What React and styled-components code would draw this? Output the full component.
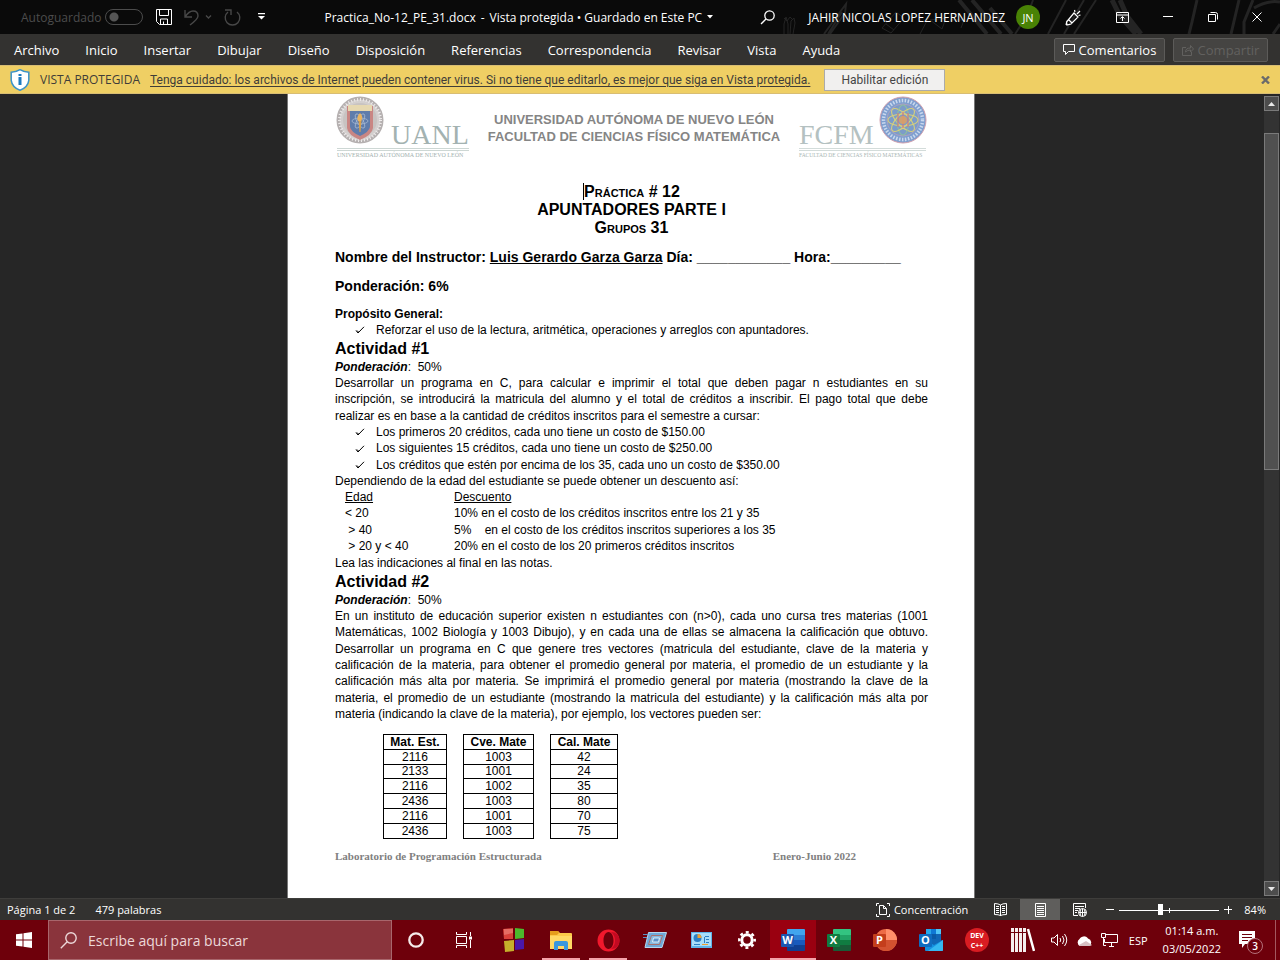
import React from 'react';
import styled, { createGlobalStyle } from 'styled-components';

const UI = '"Open Sans", "Noto Sans", sans-serif';
const COMPACT = 'Roboto, "Open Sans", sans-serif';
const DOC = '"Liberation Sans", Arial, sans-serif';
const SERIF = '"Liberation Serif", "Times New Roman", serif';

const GlobalStyle = createGlobalStyle`
  * { box-sizing: border-box; }
  body { margin: 0; background: #262626; font-family: ${UI}; }
  button, input { font-family: inherit; }
  svg { display: block; flex: none; }
`;

const Shell = styled.div`
  height: 100vh;
  display: flex;
  flex-direction: column;
  overflow: hidden;
`;

const IconButton = styled.button`
  display: flex;
  align-items: center;
  justify-content: center;
  padding: 0;
  border: 0;
  background: none;
  color: ${p => (p.$dim ? '#484848' : '#ffffff')};
  flex: none;
`;

/* Title bar */
const TitleBar = styled.header`
  position: relative;
  display: flex;
  align-items: center;
  height: 34px;
  flex: none;
  padding: 0 18px 0 21px;
  background: #0a0a0a;
  color: #ffffff;
  font-size: 12px;
  white-space: nowrap;
`;
const Doodles = styled.svg`
  position: absolute;
  top: 0;
  right: 0;
`;
const AutoSave = styled.label`
  display: flex;
  align-items: center;
  gap: 4px;
  color: #4c4c4c;
`;
const Toggle = styled.input`
  appearance: none;
  margin: 0;
  width: 38px;
  height: 16px;
  border: 1px solid #4c4c4c;
  border-radius: 8px;
  background: radial-gradient(circle at 8px 7px, #555555 4px, transparent 5px);
`;
const QuickTools = styled.div`
  display: flex;
  align-items: center;
  margin-left: 13px;
  gap: 12px;
`;
const FileName = styled.h1`
  margin: 0 0 0 55px;
  font-size: 12px;
  font-weight: 400;
  display: flex;
  align-items: center;
  gap: 5px;
`;
const Account = styled.div`
  position: relative;
  margin-left: auto;
  display: flex;
  align-items: center;
  gap: 11px;
`;
const SearchButton = styled(IconButton)`
  margin-right: 22px;
`;
const Avatar = styled.span`
  width: 24px;
  height: 24px;
  border-radius: 50%;
  background: #498205;
  display: grid;
  place-items: center;
  font-size: 11px;
`;
const WindowTools = styled.div`
  display: flex;
  align-items: center;
  justify-content: space-between;
  width: 197px;
  margin-left: 14px;
`;

/* Ribbon tabs */
const Ribbon = styled.nav`
  display: flex;
  align-items: center;
  height: 31px;
  flex: none;
  padding: 0 12px 0 14px;
  background: #333230;
  color: #ffffff;
`;
const Tabs = styled.div`
  display: flex;
  gap: 26px;
  margin-right: auto;
`;
const Tab = styled.a`
  color: #ffffff;
  text-decoration: none;
  font-size: 13px;
  line-height: 20px;
`;
const RibbonButton = styled.button`
  display: flex;
  align-items: center;
  justify-content: center;
  gap: 4px;
  height: 24px;
  width: ${p => p.$width};
  margin-left: 8px;
  padding: 0;
  border: 1px solid #5c5b59;
  border-radius: 2px;
  background: #454442;
  color: ${p => (p.$dim ? '#62615f' : '#ffffff')};
  font-size: 13px;
`;

/* Protected view message */
const MessageBar = styled.div`
  display: flex;
  align-items: center;
  height: 29px;
  flex: none;
  padding: 0 10px;
  background: #efcf64;
  border-top: 1px solid #d8bd73;
  border-bottom: 1px solid #d8bd73;
  color: #3f3d38;
  font-size: 12px;
  white-space: nowrap;
`;
const MessageTitle = styled.span`
  margin: 0 10px;
`;
const MessageLink = styled.a`
  color: inherit;
  font-family: ${COMPACT};
  text-underline-offset: 2px;
`;
const EnableButton = styled.button`
  height: 22px;
  width: 121px;
  margin-left: 14px;
  padding: 0;
  border: 1px solid #ababab;
  background: #f1f0ef;
  color: #444444;
  font-family: ${COMPACT};
  font-size: 12px;
`;
const CloseMessage = styled(IconButton)`
  margin-left: auto;
`;

/* Document area */
const Workspace = styled.main`
  display: flex;
  flex: 1;
  min-height: 0;
  background: #262626;
`;
const Canvas = styled.div`
  flex: 1;
  overflow: hidden;
  display: flex;
  justify-content: center;
  padding-right: 2px;
`;
const Page = styled.article`
  width: 688px;
  padding: 2px 46px 0 47px;
  background: #ffffff;
  border-left: 1px solid #777777;
  border-right: 1px solid #777777;
  color: #000000;
  font-family: ${DOC};
  font-size: 12px;
  line-height: 16px;
`;
const PageHeader = styled.div`
  display: flex;
  align-items: flex-start;
  justify-content: space-between;
  height: 64px;
`;
const School = styled.p`
  margin: 15px 0 0;
  color: #858585;
  font-size: 13px;
  line-height: 17px;
  font-weight: 700;
  text-align: center;
  white-space: nowrap;
`;
const Title = styled.h2`
  margin: 23px 0 12px;
  font-size: 16px;
  line-height: 18px;
  font-weight: 700;
  text-align: center;
`;
const SmallCaps = styled.span`
  font-variant: small-caps;
`;
const Caret = styled.span`
  border-left: 1px solid #000000;
`;
const FieldLine = styled.p`
  margin: 0 0 13px;
  font-size: 14px;
  line-height: 16px;
  font-weight: 700;
  white-space: nowrap;
`;
const Purpose = styled.h3`
  margin: 0;
  font-size: 12px;
  line-height: 15px;
`;
const Activity = styled.h3`
  margin: 0;
  font-size: 16px;
  line-height: 21px;
`;
const Para = styled.p`
  margin: 0;
`;
const Line = styled.span`
  display: block;
  text-align: justify;
  text-align-last: ${p => (p.$last ? 'left' : 'justify')};
  &:nth-child(3n + 2) { line-height: 17px; }
`;
const Checks = styled.ul`
  margin: 0;
  padding: 0 0 0 20px;
  list-style: none;
`;
const Check = styled.li`
  display: flex;
  align-items: center;
  gap: 11px;
  &:nth-child(2) { line-height: 17px; }
`;
const Discounts = styled.table`
  border-collapse: collapse;
  margin: 0 0 1px 10px;
  th { font-weight: 400; text-decoration: underline; text-align: left; }
  th, td { padding: 0; height: 16px; }
  tr:nth-child(3) td { height: 17px; }
  th:first-child, td:first-child { width: 109px; }
`;
const Vectors = styled.div`
  display: flex;
  gap: 16px;
  margin: 12px 0 0 48px;
`;
const Vector = styled.table`
  width: ${p => p.$width};
  border-collapse: collapse;
  text-align: center;
  th, td { border: 1px solid #000000; padding: 0; height: 15px; line-height: 14px; }
  tr:nth-child(3) td { line-height: 13px; height: 14px; }
`;
const PageFooter = styled.footer`
  display: flex;
  justify-content: space-between;
  margin: 9px 72px 0 0;
  color: #808080;
  font-family: ${SERIF};
  font-weight: 700;
  font-size: 11px;
`;

/* Scroll bar */
const ScrollBar = styled.div`
  width: 16px;
  padding: 2px 1px 2px 0;
  display: flex;
  flex-direction: column;
  background: #262626;
`;
const ScrollButton = styled.button`
  height: 15px;
  padding: 0;
  display: grid;
  place-items: center;
  border: 1px solid #7a7a7a;
  background: #4d4d4d;
  color: #e8e8e8;
`;
const ScrollTrack = styled.div`
  flex: 1;
  padding-top: 22px;
  background: #333333;
`;
const ScrollThumb = styled.div`
  height: 45%;
  border: 1px solid #7a7a7a;
  background: #505050;
`;

/* Status bar */
const StatusBar = styled.footer`
  display: flex;
  align-items: center;
  height: 22px;
  flex: none;
  padding: 0 14px 0 7px;
  background: #333230;
  border-top: 1px solid #3e3d3b;
  color: #ffffff;
  font-size: 11px;
  white-space: nowrap;
`;
const StatusInfo = styled.div`
  display: flex;
  gap: 20px;
  margin-right: auto;
`;
const Focus = styled(IconButton)`
  gap: 4px;
  font-size: 11px;
  margin-right: 12px;
`;
const ViewButton = styled(IconButton)`
  width: 40px;
  height: 21px;
  background: ${p => (p.$on ? '#5f5e5c' : 'none')};
`;
const ZoomBar = styled.div`
  display: flex;
  align-items: center;
  gap: 5px;
  margin: 0 12px 0 6px;
`;
const ZoomRange = styled.input`
  appearance: none;
  width: 100px;
  height: 12px;
  margin: 0;
  background:
    linear-gradient(#ffffff, #ffffff) 50px 4px / 1px 5px no-repeat,
    linear-gradient(#ffffff, #ffffff) 0 6px / 100% 1px no-repeat;
  &::-webkit-slider-thumb {
    appearance: none;
    width: 5px;
    height: 11px;
    background: #ffffff;
  }
`;

/* Task bar */
const TaskBar = styled.div`
  display: flex;
  align-items: stretch;
  height: 40px;
  flex: none;
  background: #6e000b;
  color: #ffffff;
`;
const Start = styled(IconButton)`
  width: 48px;
`;
const SearchBox = styled.label`
  display: flex;
  align-items: center;
  gap: 11px;
  width: 344px;
  padding: 0 11px;
  background: #8a343c;
  border: 1px solid #a8666c;
`;
const SearchInput = styled.input`
  flex: 1;
  min-width: 0;
  border: 0;
  padding: 0;
  background: none;
  color: #ffffff;
  font-size: 14px;
  &::placeholder { color: #ecd8d9; opacity: 1; }
`;
const SystemButtons = styled.div`
  display: flex;
  margin-right: 3px;
`;
const Pinned = styled.div`
  display: flex;
  gap: ${p => p.$gap || '0'};
`;
const TaskButton = styled(IconButton)`
  width: ${p => (p.$wide ? '48px' : '46px')};
  background: ${p => (p.$active ? '#9a0010' : 'none')};
  background-image: ${p => (p.$open ? 'linear-gradient(#f4a3aa, #f4a3aa)' : 'none')};
  background-size: ${p => (p.$active ? '100%' : '38px')} 2px;
  background-position: bottom center;
  background-repeat: no-repeat;
`;
const Tray = styled.div`
  display: flex;
  align-items: center;
  margin-left: auto;
  gap: 8px;
  padding-right: 4px;
  font-size: 11px;
  white-space: nowrap;
`;
const Language = styled.span`
  margin: 0 7px 0 3px;
`;
const Clock = styled.time`
  text-align: center;
  line-height: 18px;
`;
const Notices = styled(IconButton)`
  position: relative;
  width: 26px;
  height: 30px;
  margin: 0 4px 0 8px;
`;
const Badge = styled.span`
  position: absolute;
  right: 0;
  bottom: 1px;
  width: 16px;
  height: 16px;
  border: 1px solid #b5707a;
  border-radius: 50%;
  background: #6e000b;
  font-size: 10px;
  line-height: 14px;
  font-weight: 600;
`;
const ShowDesktop = styled.span`
  width: 1px;
  height: 40px;
  background: #a3585f;
`;

const Svg = ({ w = 16, h = w, children, ...rest }) => (
  <svg width={w} height={h} viewBox={`0 0 ${w} ${h}`} fill="none" stroke="currentColor" aria-hidden="true" {...rest}>
    {children}
  </svg>
);

const tabs = ['Archivo', 'Inicio', 'Insertar', 'Dibujar', 'Diseño', 'Disposición', 'Referencias', 'Correspondencia', 'Revisar', 'Vista', 'Ayuda'];

const firstActivity = [
  'Desarrollar un programa en C, para calcular e imprimir el total que deben pagar n estudiantes en su',
  'inscripción, se introducirá la matricula del alumno y el total de créditos a inscribir. El pago total que debe',
  'realizar es en base a la cantidad de créditos inscritos para el semestre a cursar:',
];
const costs = [
  'Los primeros 20 créditos, cada uno tiene un costo de $150.00',
  'Los siguientes 15 créditos, cada uno tiene un costo de $250.00',
  'Los créditos que estén por encima de los 35, cada uno un costo de $350.00',
];
const discounts = [
  ['< 20', '10% en el costo de los créditos inscritos entre los 21 y 35'],
  ['\u00a0> 40', '5%\u00a0\u00a0\u00a0 en el costo de los créditos inscritos superiores a los 35'],
  ['\u00a0> 20 y < 40', '20% en el costo de los 20 primeros créditos inscritos'],
];
const secondActivity = [
  'En un instituto de educación superior existen n estudiantes con (n>0), cada uno cursa tres materias (1001',
  'Matemáticas, 1002 Biología y 1003 Dibujo), y en cada una de ellas se almacena la calificación que obtuvo.',
  'Desarrollar un programa en C que genere tres vectores (matricula del estudiante, clave de la materia y',
  'calificación de la materia, para obtener el promedio general por materia, el promedio de un estudiante y la',
  'calificación más alta por materia. Se imprimirá el promedio general por materia (mostrando la clave de la',
  'materia, el promedio de un estudiante (mostrando la matricula del estudiante) y la calificación más alta por',
  'materia (indicando la clave de la materia), por ejemplo, los vectores pueden ser:',
];
const vectors = [
  { name: 'Mat. Est.', width: '64px', values: [2116, 2133, 2116, 2436, 2116, 2436] },
  { name: 'Cve. Mate', width: '71px', values: [1003, 1001, 1002, 1003, 1001, 1003] },
  { name: 'Cal. Mate', width: '68px', values: [42, 24, 35, 80, 70, 75] },
];

const Lines = ({ lines }) => (
  <Para>
    {lines.map((text, i) => <Line key={text} $last={i === lines.length - 1}>{text}</Line>)}
  </Para>
);

const CheckItem = ({ children }) => (
  <Check>
    <Svg w={10} h={8}><path d="M1 4.500l2 2.500L9 .8M2 4.500l1.500 1.500" /></Svg>
    {children}
  </Check>
);

const UanlLogo = () => (
  <svg width="135" height="64" viewBox="0 0 135 64" role="img" aria-label="UANL">
    <circle cx="25" cy="24" r="22" fill="#d3cfce" stroke="#b5b0b0" strokeWidth="3" />
    <circle cx="25" cy="24" r="20.500" fill="none" stroke="#efecec" strokeWidth="3" strokeDasharray="1 2" />
    <circle cx="25" cy="24" r="17" fill="#c8c3c1" />
    <path d="M12 10h26v22q-1 7-13 12q-12-5-13-12z" fill="#c98683" />
    <path d="M15 12h20v19q-1 5-10 9q-9-4-10-9z" fill="#5f7cab" />
    <path d="M13 9h24v6H13z" fill="#e6d8b0" />
    <g fill="none" stroke="#a5b7d0" strokeWidth=".8">
      <ellipse cx="25" cy="25" rx="8" ry="3" />
      <ellipse cx="25" cy="25" rx="8" ry="3" transform="rotate(60 25 25)" />
      <ellipse cx="25" cy="25" rx="8" ry="3" transform="rotate(120 25 25)" />
    </g>
    <path d="M23.500 24h3l-1 12h-1z" fill="#d9a14d" />
    <path d="M25 17q4 4 1 8h-3q-2-4 2-8z" fill="#e9b35f" />
    <text x="56" y="48" fontFamily={SERIF} fontSize="28" fill="#a3b2b1">UANL</text>
    <path d="M2 52.500h132M2 54.500h132" stroke="#cdd7d4" />
    <text x="2" y="61" fontFamily={SERIF} fontSize="6" fill="#a3b1af">UNIVERSIDAD AUTÓNOMA DE NUEVO LEÓN</text>
  </svg>
);

const FcfmLogo = () => (
  <svg width="130" height="64" viewBox="0 0 130 64" role="img" aria-label="FCFM">
    <text x="1" y="48" fontFamily={SERIF} fontSize="28" fill="#b4c1c1">FCFM</text>
    <path d="M1 52.500h127M1 54.500h127" stroke="#d3dcda" />
    <text x="1" y="61" fontFamily={SERIF} fontSize="5.500" fill="#a9b6b4">FACULTAD DE CIENCIAS FÍSICO MATEMÁTICAS</text>
    <circle cx="105" cy="24" r="23" fill="#7f9fcf" stroke="#cf9fae" />
    <circle cx="105" cy="24" r="19.500" fill="none" stroke="#c9d8ee" strokeWidth="3.500" strokeDasharray="1.500 1.500" />
    <circle cx="105" cy="24" r="16" fill="#7c9cc9" stroke="#c1a4bc" strokeWidth=".7" />
    <g fill="none" strokeWidth="1.100">
      <ellipse cx="105" cy="24" rx="15" ry="6" stroke="#d6cf7c" />
      <ellipse cx="105" cy="24" rx="15" ry="6" stroke="#d6cf7c" transform="rotate(45 105 24)" />
      <ellipse cx="105" cy="24" rx="15" ry="6" stroke="#8fc09c" transform="rotate(90 105 24)" />
      <ellipse cx="105" cy="24" rx="15" ry="6" stroke="#d6cf7c" transform="rotate(135 105 24)" />
      <path d="M100 17v14M105 16v16M110 17v14" stroke="#d0757f" />
    </g>
    <circle cx="105" cy="24" r="4" fill="#e2a35c" opacity=".8" />
  </svg>
);

const OfficeIcon = ({ letter, tones, round }) => (
  <svg width="24" height="22" viewBox="0 0 24 22" aria-hidden="true">
    {round ? (
      <g>
        <circle cx="13" cy="11" r="11" fill={tones[1]} />
        <path d="M13 0a11 11 0 0 1 11 11H13z" fill={tones[0]} />
        <path d="M2 11h22a11 11 0 0 1-22 0z" fill={tones[2]} />
      </g>
    ) : (
      <g>
        <path d="M6 1q0-1 1-1h16q1 0 1 1v5H6z" fill={tones[0]} />
        <path d="M6 6h18v5H6z" fill={tones[1]} />
        <path d="M6 11h18v5H6z" fill={tones[2]} />
        <path d="M6 16h18v5q0 1-1 1H7q-1 0-1-1z" fill={tones[3]} />
      </g>
    )}
    <rect x="0" y="5" width="13" height="13" rx="1" fill={tones[4]} />
    <text x="6.500" y="15" textAnchor="middle" fontFamily={UI} fontWeight="700" fontSize="11" fill="#fff">{letter}</text>
  </svg>
);

const OutlookIcon = () => (
  <svg width="24" height="22" viewBox="0 0 24 22" aria-hidden="true">
    <path d="M7 0h15v11l2 1v6H7z" fill="#1066b5" />
    <path d="M7 0h5v5H7z" fill="#28a8ea" />
    <path d="M12 0h5v5h-5z" fill="#0f78d4" />
    <path d="M17 0h5v5h-5z" fill="#50c5f5" />
    <path d="M12 5h5v5h-5z" fill="#0a5aa6" />
    <path d="M6 11l9 5 9-5v10q0 1-1 1H7q-1 0-1-1z" fill="#1490df" />
    <path d="M24 11v10q0 1-1 1H9z" fill="#35b8f1" />
    <rect x="0" y="5" width="13" height="13" rx="1" fill="#0f6cc0" />
    <text x="6.500" y="15" textAnchor="middle" fontFamily={UI} fontWeight="700" fontSize="11" fill="#fff">O</text>
  </svg>
);

export default function App() {
  return (
    <Shell>
      <GlobalStyle />
      <TitleBar>
        <Doodles width="520" height="34" fill="none" stroke="#242424" strokeWidth="2" aria-hidden="true">
          <path d="M24 34V24l2-7 2 7v10M30 34l1-13 3-3 1 5-2 11M24 18l3 3 3-4 3 3" strokeWidth="1" />
          <path d="M64 34l16-22 6-8-1 9-15 21M68 34l14-22" />
          <path d="M122 28l14-16 8 6-13 15zM126 24l8 6M160 34l9-17M170 20l16-2-4 11zM190 20h14l-3 8" strokeWidth="1" />
          <path d="M199 0l28 34M212 0l29 34M230 8l22 26" strokeWidth="4" />
          <path d="M273 0q-5 16-18 34M306 0l-18 34M324 0l-20 34M336 0l-22 34" />
          <path d="M352 0l8 16 16 18M360 0l7 16 14 18" strokeWidth="5" />
          <path d="M437 0l-5 22-3 12M479 0l-8 34M493 0l-9 22v12M494 8q13-8 26-6M520 24l-7 10" strokeWidth="3" />
        </Doodles>
        <AutoSave>Autoguardado<Toggle type="checkbox" disabled /></AutoSave>
        <QuickTools>
          <IconButton aria-label="Guardar"><Svg w={16}><path d="M.5.5h15v15H3.500l-3-3zM3.500.5v6h9v-6M4.500 15v-5h7v5M7.500 12.500V15" /></Svg></IconButton>
          <IconButton aria-label="Deshacer" $dim>
            <Svg w={28} h={17} strokeWidth="1.400"><path d="M1 1v7h7M1 8Q5 2 9 2q5 0 5 5 0 3-8 9" /><path d="M22 6.500l2.500 2.500L27 6.500" /></Svg>
          </IconButton>
          <IconButton aria-label="Rehacer" $dim><Svg w={17} strokeWidth="1.400"><path d="M1 1h6v5M13 3a7.300 7.300 0 1 1-9 0" /></Svg></IconButton>
          <IconButton aria-label="Personalizar"><Svg w={16} h={8}><path d="M5 .5h7" strokeWidth="1.500" /><path d="M5 3h7l-3.500 3.500z" fill="currentColor" stroke="none" /></Svg></IconButton>
        </QuickTools>
        <FileName>
          <span>Practica_No-12_PE_31.docx</span><span>-</span><span>Vista protegida • Guardado en Este PC</span>
          <Svg w={6} h={4}><path d="M0 0h6L3 3.500z" fill="currentColor" stroke="none" /></Svg>
        </FileName>
        <Account>
          <SearchButton aria-label="Buscar"><Svg w={15} strokeWidth="1.300"><circle cx="9.500" cy="5.500" r="4.700" /><path d="M6 9L1 14" /></Svg></SearchButton>
          <span>JAHIR NICOLAS LOPEZ HERNANDEZ</span>
          <Avatar>JN</Avatar>
          <WindowTools>
            <IconButton aria-label="Novedades"><Svg w={16} h={17} strokeWidth="1.200"><path d="M9 4l4 4-7 7-4 1-.5-3zM4 11l3 3M10 3L9.500 1M12 5l3-3M13.500 6.500l2-.5M2 12l-1 4" /></Svg></IconButton>
            <IconButton aria-label="Opciones de cinta"><Svg w={13} h={11}><path d="M.5.5h12v10H.5zM.5 3h12M6.500 9V5M4.500 6.500l2-2 2 2" /></Svg></IconButton>
            <IconButton aria-label="Minimizar"><Svg w={10}><path d="M0 4.500h10" /></Svg></IconButton>
            <IconButton aria-label="Restaurar"><Svg w={10}><path d="M.5 2.500h7v7h-7zM2.500.5h5q2 0 2 2v5" /></Svg></IconButton>
            <IconButton aria-label="Cerrar"><Svg w={10}><path d="M.5.5l9 9M9.500.5l-9 9" /></Svg></IconButton>
          </WindowTools>
        </Account>
      </TitleBar>

      <Ribbon>
        <Tabs>{tabs.map(t => <Tab key={t} href="#">{t}</Tab>)}</Tabs>
        <RibbonButton $width="111px">
          <Svg w={12} h={11}><path d="M.5.5h11v7h-6l-3 3v-3h-2z" /></Svg>Comentarios
        </RibbonButton>
        <RibbonButton $width="95px" $dim disabled>
          <Svg w={12} h={12}><path d="M4 3.500H.5v8h9V8M3.500 8q0-4 5-4V1.500l3 3.500-3 3V6q-3 0-5 2z" /></Svg>Compartir
        </RibbonButton>
      </Ribbon>

      <MessageBar>
        <Svg w={20} h={22} stroke="none">
          <path d="M10 .7q4 2.600 8.800 2.600v8Q18 18 10 21.300 2 18 1.200 11.300v-8Q6 3.300 10 .7z" fill="#ffffff" stroke="#3b93c9" strokeWidth="1.500" />
          <path d="M8.500 5h3v2h-3zM8.500 8h3v8h-3z" fill="#1e7bbf" />
        </Svg>
        <MessageTitle>VISTA PROTEGIDA</MessageTitle>
        <MessageLink href="#">Tenga cuidado: los archivos de Internet pueden contener virus. Si no tiene que editarlo, es mejor que siga en Vista protegida.</MessageLink>
        <EnableButton>Habilitar edición</EnableButton>
        <CloseMessage aria-label="Cerrar mensaje"><Svg w={9} h={8} stroke="#6b6b6b" strokeWidth="2.400"><path d="M1 .5l7 7M8 .5l-7 7" /></Svg></CloseMessage>
      </MessageBar>

      <Workspace>
        <Canvas>
          <Page>
            <PageHeader>
              <UanlLogo />
              <School>UNIVERSIDAD AUTÓNOMA DE NUEVO LEÓN<br />FACULTAD DE CIENCIAS FÍSICO MATEMÁTICA</School>
              <FcfmLogo />
            </PageHeader>
            <Title>
              <Caret /><SmallCaps>Práctica # 12</SmallCaps><br />
              APUNTADORES PARTE I<br />
              <SmallCaps>Grupos 31</SmallCaps>
            </Title>
            <FieldLine>Nombre del Instructor: <u>Luis Gerardo Garza Garza</u> Día: ____________ Hora:_________</FieldLine>
            <FieldLine>Ponderación: 6%</FieldLine>
            <Purpose>Propósito General:</Purpose>
            <Checks><CheckItem>Reforzar el uso de la lectura, aritmética, operaciones y arreglos con apuntadores.</CheckItem></Checks>
            <Activity>Actividad #1</Activity>
            <Para><b><i>Ponderación</i></b>:&nbsp; 50%</Para>
            <Lines lines={firstActivity} />
            <Checks>{costs.map(c => <CheckItem key={c}>{c}</CheckItem>)}</Checks>
            <Para>Dependiendo de la edad del estudiante se puede obtener un descuento así:</Para>
            <Discounts>
              <tbody>
                <tr><th scope="col">Edad</th><th scope="col">Descuento</th></tr>
                {discounts.map(([age, text]) => <tr key={age}><td>{age}</td><td>{text}</td></tr>)}
              </tbody>
            </Discounts>
            <Para>Lea las indicaciones al final en las notas.</Para>
            <Activity>Actividad #2</Activity>
            <Para><b><i>Ponderación</i></b>:&nbsp; 50%</Para>
            <Lines lines={secondActivity} />
            <Vectors>
              {vectors.map(v => (
                <Vector key={v.name} $width={v.width}>
                  <tbody>
                    <tr><th scope="col">{v.name}</th></tr>
                    {v.values.map((n, i) => <tr key={i}><td>{n}</td></tr>)}
                  </tbody>
                </Vector>
              ))}
            </Vectors>
            <PageFooter><span>Laboratorio de Programación Estructurada</span><span>Enero-Junio 2022</span></PageFooter>
          </Page>
        </Canvas>
        <ScrollBar>
          <ScrollButton aria-label="Subir"><Svg w={7} h={4}><path d="M0 4l3.500-4L7 4z" fill="currentColor" stroke="none" /></Svg></ScrollButton>
          <ScrollTrack><ScrollThumb /></ScrollTrack>
          <ScrollButton aria-label="Bajar"><Svg w={7} h={4}><path d="M0 0l3.500 4L7 0z" fill="currentColor" stroke="none" /></Svg></ScrollButton>
        </ScrollBar>
      </Workspace>

      <StatusBar>
        <StatusInfo><span>Página 1 de 2</span><span>479 palabras</span></StatusInfo>
        <Focus><Svg w={14} h={14}><path d="M3 .5H.5V3M11 .5h2.500V3M3 13.500H.5V11M11 13.500h2.500V11M3.500 2.500h4l3 3v6h-7zM7.500 2.500v3h3" /></Svg>Concentración</Focus>
        <ViewButton aria-label="Modo de lectura"><Svg w={13} h={13}><path d="M6.500 2Q4 .5.500.5v11q4 0 6 1 2-1 6-1V.5q-4 0-6 1.500v11M2 3.500h3M2 5.500h3M2 7.500h3M2 9.500h3M8 3.500h3M8 5.500h3M8 7.500h3M8 9.500h3" /></Svg></ViewButton>
        <ViewButton $on aria-label="Diseño de impresión"><Svg w={11} h={14}><path d="M.5.5h10v13H.5zM2 3.500h7M2 5.500h7M2 7.500h7M2 9.500h7M2 11.500h7" /></Svg></ViewButton>
        <ViewButton aria-label="Diseño web"><Svg w={14} h={14}><path d="M5 12.500H.5V.5h12V5M2 3.500h9M2 5.500h5M2 7.500h3M2 9.500h2" /><circle cx="9.500" cy="9.500" r="4" /><path d="M5.500 9.500h8M9.500 5.500v8M7.500 6.500q-1 3 0 6M11.500 6.500q1 3 0 6" /></Svg></ViewButton>
        <ZoomBar>
          <IconButton aria-label="Alejar"><Svg w={8}><path d="M0 3.500h8" /></Svg></IconButton>
          <ZoomRange type="range" min="0" max="100" defaultValue="41" aria-label="Zoom" />
          <IconButton aria-label="Acercar"><Svg w={8}><path d="M0 3.500h8M4.500 0v8" /></Svg></IconButton>
        </ZoomBar>
        <span>84%</span>
      </StatusBar>

      <TaskBar>
        <Start aria-label="Inicio"><Svg w={16} h={16} stroke="none"><path d="M0 2.300L6.500 1.400V7.500H0zM7.500 1.200L16 0v7.500H7.500zM0 8.500h6.500v6.100L0 13.700zM7.500 8.500H16V16l-8.500-1.200z" fill="#fff" /></Svg></Start>
        <SearchBox>
          <Svg w={17} stroke="#ecd8d9" strokeWidth="1.400"><circle cx="11" cy="6" r="5.200" /><path d="M7.200 9.800L.8 16.200" /></Svg>
          <SearchInput placeholder="Escribe aquí para buscar" aria-label="Escribe aquí para buscar" />
        </SearchBox>
        <SystemButtons>
          <TaskButton $wide aria-label="Cortana"><Svg w={16}><circle cx="8" cy="8" r="6.700" stroke="#f5eaea" strokeWidth="2.300" /></Svg></TaskButton>
          <TaskButton $wide aria-label="Vista de tareas"><Svg w={16} h={16}><path d="M.5 0v2.500h10V0M.5 16v-2.500h10V16M.5 4.500h10v7H.5zM14.500 0v4M14.500 8v8" /><path d="M13 4.500h3v3h-3z" fill="currentColor" stroke="none" /></Svg></TaskButton>
        </SystemButtons>
        <Pinned $gap="1px">
          <TaskButton aria-label="Menú">
            <Svg w={22} h={24} stroke="none">
              <path d="M0 1l10-1v11H1z" fill="#d8403a" /><path d="M12 0l9 1v9l-9 1z" fill="#4cb92c" />
              <path d="M1 13l10-1v11l-9 1z" fill="#c6b02b" /><path d="M12 12l9-1v10l-9 1z" fill="#4a18a8" />
              <path d="M1 1h9v4l-9 2z" fill="#ee8a80" opacity=".6" />
            </Svg>
          </TaskButton>
          <TaskButton $open aria-label="Explorador">
            <Svg w={22} h={19} stroke="none">
              <path d="M0 1q0-1 1-1h7l2 2h11q1 0 1 1v15H0z" fill="#fcc94a" /><path d="M0 1q0-1 1-1h7l1 2-2 2H0z" fill="#e59d1c" />
              <path d="M0 5h22v13H0z" fill="#ffd966" /><path d="M4 12q0-2 2-2h10q2 0 2 2v7h-4v-4H8v4H4z" fill="#3a97dd" />
            </Svg>
          </TaskButton>
          <TaskButton $open aria-label="Opera">
            <Svg w={23} h={23} stroke="none"><path fillRule="evenodd" d="M11.500.5a11 11 0 1 0 0 22 11 11 0 1 0 0-22zM11.500 3c3 0 5 4 5 8.500s-2 8.500-5 8.500-5-4-5-8.500S8.500 3 11.500 3z" fill="#f0182c" /><path d="M14 3q8 0 8.500 8.500Q22 20 14 20q4-3 4-8.500T14 3z" fill="#c20a22" /></Svg>
          </TaskButton>
          <TaskButton aria-label="Ejecutar">
            <Svg w={24} h={16}><path d="M5.500.5h18l-4.500 15H2z" fill="#6fa8d8" stroke="#b7d7ee" /><path d="M8.500 3.500h11l-3 9h-11z" fill="#86b9e0" stroke="#a8716f" /><path d="M10.500 6h6l-1 4h-6z" fill="#5b92c9" stroke="#dceefa" /><path d="M0 2.500h5M0 5.500h4" stroke="#5f8fc0" /></Svg>
          </TaskButton>
        </Pinned>
        <Pinned>
          <TaskButton aria-label="Panel de control">
            <Svg w={21} h={16} stroke="none"><path d="M0 0h21v16H0z" fill="#5fb4ea" /><path d="M1 1h19v13H1z" fill="#a9defa" /><circle cx="6.500" cy="6" r="4" fill="#2d7fc4" /><path d="M6.500 6V2a4 4 0 0 1 4 4z" fill="#f0a030" /><path d="M13 5h1v6h-1zM14 4h4v1h-4zM15 7h3v1h-3zM15 10h3v1h-3z" fill="#2d7fc4" /><path d="M3 12h6v1H3z" fill="#2d7fc4" /><path d="M11 12h6v1h-6z" fill="#f0a030" /></Svg>
          </TaskButton>
          <TaskButton aria-label="Configuración">
            <Svg w={18}><circle cx="9" cy="9" r="5.200" strokeWidth="3" /><circle cx="9" cy="9" r="7.700" strokeWidth="2.500" strokeDasharray="3 3.050" strokeDashoffset="1.500" /></Svg>
          </TaskButton>
          <TaskButton $open $active aria-label="Word"><OfficeIcon letter="W" tones={['#41a5ee', '#2b7cd3', '#185abd', '#103f91', '#1d56b0']} /></TaskButton>
          <TaskButton aria-label="Excel"><OfficeIcon letter="X" tones={['#33c481', '#21a366', '#107c41', '#185c37', '#107c41']} /></TaskButton>
          <TaskButton aria-label="PowerPoint"><OfficeIcon round letter="P" tones={['#ff8f6b', '#ed6c47', '#d35230', '', '#c43e1c']} /></TaskButton>
          <TaskButton aria-label="Outlook"><OutlookIcon /></TaskButton>
          <TaskButton aria-label="Dev-C++">
            <Svg w={24} stroke="none"><circle cx="12" cy="12" r="12" fill="#d91c22" /><g fontFamily={UI} fontSize="7" fontWeight="700" fill="#fff" textAnchor="middle"><text x="12" y="10">DEV</text><text x="12" y="20">C++</text></g></Svg>
          </TaskButton>
          <TaskButton aria-label="Biblioteca">
            <Svg w={24} h={24}><path d="M1.500 0v24M5.500 0v24M9.500 0v24M13.500 0v24" strokeWidth="3" stroke="#f6eeee" /><path d="M17 1l6 22" strokeWidth="2.500" /><path d="M0 4.500h15" stroke="#6e000b" /></Svg>
          </TaskButton>
        </Pinned>
        <Tray>
          <Svg w={17} h={14}><path d="M.5 5v4H3l3.500 3.500v-11L3 5zM9 5q1.500 2 0 4M11.500 3q3 4 0 8M13.500 1q4.500 6 0 12" /></Svg>
          <Svg w={17} h={11} stroke="none"><path d="M4 11a4 4 0 0 1-.5-7A5 5 0 0 1 12 3.500a4 4 0 0 1 1 7.500z" fill="#fff" /><path d="M3 10l7-4 6 4q-1 1-3 1H4z" fill="#d7c0c3" /></Svg>
          <Svg w={17} h={14}><path d="M5 1.500h11.500v8H3.500V6M8 13.500h5M10.500 9.500v4M.5.5h4v4h-4zM2.500 4.500v8H5" /></Svg>
          <Language>ESP</Language>
          <Clock>01:14 a.m.<br />03/05/2022</Clock>
          <Notices aria-label="Notificaciones">
            <Svg w={26} h={30} stroke="none"><path d="M2 6h16v13H8l-3 4v-4H2z" fill="#fff" /><path d="M5 9.500h10M5 12.500h10M5 15.500h6" stroke="#6e000b" /></Svg>
            <Badge>3</Badge>
          </Notices>
          <ShowDesktop />
        </Tray>
      </TaskBar>
    </Shell>
  );
}
